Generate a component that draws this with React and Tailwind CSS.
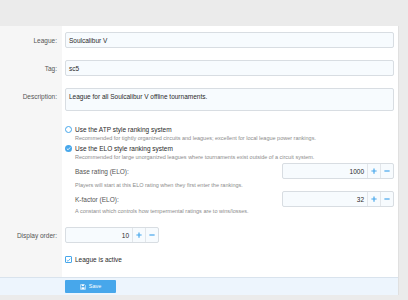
import React from "react";

const font = { fontFamily: '"Liberation Sans", Arial, sans-serif' };

const Row = ({ label, pt, children, h = "h-[16px]" }) => (
  <div className="flex">
    <div className={`w-[62px] shrink-0 bg-[#f6f6f6] pr-[5px] text-[#555] ${pt}`}>
      <div className={`${h} flex items-center justify-end`}>{label}</div>
    </div>
    <div className={`flex-1 pl-[3px] pr-[4px] ${pt}`}>{children}</div>
  </div>
);

const TextInput = ({ value }) => (
  <div className="h-[16px] border border-[#d8dde2] rounded-[2px] bg-[#f7fbfe] px-[3px] flex items-center text-[#2a2a2a]">
    {value}
  </div>
);

const NumberInput = ({ value, width }) => (
  <div className={`h-[16px] border border-[#d8dde2] rounded-[2px] bg-[#f7fbfe] flex ${width}`}>
    <div className="flex-1 flex items-center justify-end pr-[3px] text-[#2a2a2a]">{value}</div>
    <div className="w-[13px] border-l border-[#e2e6ea] flex items-center justify-center">
      <svg viewBox="0 0 8 8" className="w-[6px] h-[6px]">
        <path d="M4 0.5 V7.5 M0.5 4 H7.5" stroke="#47a7eb" strokeWidth="1.6" />
      </svg>
    </div>
    <div className="w-[13px] border-l border-[#e2e6ea] flex items-center justify-center">
      <svg viewBox="0 0 8 8" className="w-[6px] h-[6px]">
        <path d="M0.5 4 H7.5" stroke="#47a7eb" strokeWidth="1.6" />
      </svg>
    </div>
  </div>
);

const Radio = ({ checked }) =>
  checked ? (
    <span className="w-[7px] h-[7px] rounded-full bg-[#47a7eb] flex items-center justify-center shrink-0">
      <svg viewBox="0 0 8 8" className="w-[5px] h-[5px]">
        <path d="M1.3 4.2 L3.3 6 L6.7 2.2" stroke="white" strokeWidth="1.4" fill="none" />
      </svg>
    </span>
  ) : (
    <span className="w-[7px] h-[7px] rounded-full border border-[#47a7eb] bg-white shrink-0" />
  );

const Hint = ({ children }) => (
  <div className="text-[5.5px] leading-[8px] text-[#8c8c8c] pl-[10px]">{children}</div>
);

export default function App() {
  return (
    <div className="w-[408px] h-[300px] bg-[#ebebeb] pt-[26px] text-[6.5px] leading-[9px]" style={font}>
      <div className="w-[399px] bg-white border-r border-[#e0e0e0]">
        <Row label="League:" pt="pt-[6px]">
          <TextInput value="Soulcalibur V" />
        </Row>
        <Row label="Tag:" pt="pt-[12px]">
          <TextInput value="sc5" />
        </Row>
        <Row label="Description:" pt="pt-[12px]">
          <div className="h-[23px] border border-[#d8dde2] rounded-[2px] bg-[#f7fbfe] px-[3px] pt-[3px] text-[#2a2a2a]">
            League for all Soulcalibur V offline tournaments.
          </div>
        </Row>
        <Row label="" pt="pt-[14px]" h="h-[9px]">
          <div className="flex items-center gap-[3px] h-[9px] text-[#2a2a2a]">
            <Radio />
            <span>Use the ATP style ranking system</span>
          </div>
          <Hint>Recommended for tightly organized circuits and leagues; excellent for local league power rankings.</Hint>
          <div className="flex items-center gap-[3px] h-[9px] mt-[2px] text-[#2a2a2a]">
            <Radio checked />
            <span>Use the ELO style ranking system</span>
          </div>
          <Hint>Recommended for large unorganized leagues where tournaments exist outside of a circuit system.</Hint>
          <div className="flex items-center justify-between pl-[10px] mt-[2px]">
            <span className="text-[#555]">Base rating (ELO):</span>
            <NumberInput value="1000" width="w-[112px]" />
          </div>
          <div className="mt-[2px]">
            <Hint>Players will start at this ELO rating when they first enter the rankings.</Hint>
          </div>
          <div className="flex items-center justify-between pl-[10px] mt-[2px]">
            <span className="text-[#555]">K-factor (ELO):</span>
            <NumberInput value="32" width="w-[112px]" />
          </div>
          <Hint>A constant which controls how tempermental ratings are to wins/losses.</Hint>
        </Row>
        <Row label="Display order:" pt="pt-[12px]">
          <NumberInput value="10" width="w-[94px]" />
        </Row>
        <Row label="" pt="pt-[12px]" h="h-[22px]">
          <div className="flex items-center gap-[3px] h-[9px] text-[#2a2a2a]">
            <span className="w-[7px] h-[7px] border border-[#47a7eb] rounded-[1px] bg-white flex items-center justify-center shrink-0">
              <svg viewBox="0 0 8 8" className="w-[6px] h-[6px]">
                <path d="M1.2 4.2 L3.2 6 L6.8 1.8" stroke="#47a7eb" strokeWidth="1.3" fill="none" />
              </svg>
            </span>
            <span>League is active</span>
          </div>
        </Row>
        <div className="border-t border-[#d9e3ed] bg-[#edf5fd] pl-[65px] pt-[2px] pb-[2px]">
          <button className="w-[51px] h-[13px] bg-[#47a7eb] rounded-[1px] flex items-center justify-center gap-[3px] text-white text-[5.5px]">
            <svg viewBox="0 0 10 10" className="w-[6px] h-[6px]">
              <path d="M1 1 H7.5 L9 2.5 V9 H1 Z" fill="none" stroke="white" strokeWidth="1" />
              <rect x="3" y="1" width="3.5" height="2.5" fill="white" />
              <rect x="2.5" y="5.5" width="5" height="3" fill="white" />
            </svg>
            <span>Save</span>
          </button>
        </div>
      </div>
    </div>
  );
}
